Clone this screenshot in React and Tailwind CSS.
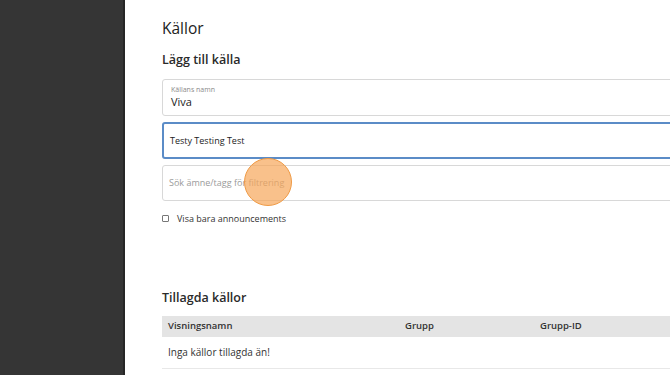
const App = () => {
    return (
        <div
            className="relative flex h-[375px] w-[670px] overflow-hidden bg-white"
            style={{ fontFamily: '"Open Sans", "Noto Sans", sans-serif' }}
        >
            <aside className="h-full w-[125px] shrink-0 border-r-2 border-[#262626] bg-[#353535]"></aside>

            <main className="w-[560px] shrink-0 pl-[37px] pt-[18px] text-[#222]">
                <h1 className="text-[15.5px] leading-[20px] font-medium">Källor</h1>
                <h2 className="mt-[13px] text-[12.5px] leading-[17px] font-semibold text-[#2a2a2a]">
                    Lägg till källa
                </h2>

                <div className="mt-[11px] h-[37px] rounded-[3px] border border-[#d8d8d8] px-[8px] pt-[5px]">
                    <div className="text-[7px] leading-[9px] text-[#8a8a8a]">Källans namn</div>
                    <div className="mt-[1px] text-[11px] leading-[14px] text-[#222]">Viva</div>
                </div>

                <div className="mt-[6px] flex h-[37px] items-center rounded-[3px] border-2 border-[#5b8cc7] px-[6px] text-[9px] font-medium text-[#222]">
                    Testy Testing Test
                </div>

                <div className="mt-[6px] flex h-[36px] items-center rounded-[3px] border border-[#d8d8d8] px-[6px] text-[9px] text-[#9a9a9a]">
                    Sök ämne/tagg för filtrering
                </div>

                <label className="mt-[11px] flex items-center gap-[8px] text-[9px] font-medium text-[#333]">
                    <span className="h-[7px] w-[7px] rounded-[1px] border border-[#777] bg-white"></span>
                    Visa bara announcements
                </label>

                <h2 className="mt-[63px] text-[12.5px] leading-[17px] font-semibold text-[#2a2a2a]">
                    Tillagda källor
                </h2>

                <table className="mt-[10px] w-full border-collapse text-left">
                    <thead>
                        <tr className="h-[21px] bg-[#e4e4e4] text-[9.5px] text-[#333]">
                            <th className="w-[243px] pl-[6px] font-semibold">Visningsnamn</th>
                            <th className="w-[135px] font-semibold">Grupp</th>
                            <th className="font-semibold">Grupp-ID</th>
                        </tr>
                    </thead>
                    <tbody>
                        <tr className="h-[32px] border-b border-[#e8e8e8] text-[10px] text-[#333]">
                            <td className="pl-[6px]" colSpan={3}>Inga källor tillagda än!</td>
                        </tr>
                    </tbody>
                </table>
            </main>

            {/* click indicator */}
            <div className="absolute left-[244px] top-[158px] h-[48px] w-[48px] rounded-full border border-[#ef9a45] bg-[#f6a65a]/70"></div>
        </div>
    );
};

export default App;
